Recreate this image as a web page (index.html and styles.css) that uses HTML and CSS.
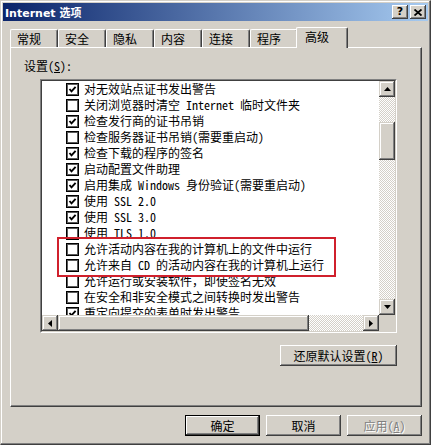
FILE: index.html
```html
<!DOCTYPE html>
<html lang="zh-CN">
<head>
    <meta charset="UTF-8">
    <meta name="viewport" content="width=device-width, initial-scale=1.0">
    <title>Internet 选项</title>
    <link rel="stylesheet" href="styles.css">
</head>
<body>
    <div class="window">
        <div class="titlebar">
            <span class="title">Internet 选项</span>
            <div class="caption-buttons">
                <button class="caption-btn">?</button>
                <button class="caption-btn">
                    <svg width="8" height="7" viewBox="0 0 8 7"><path d="M0.5 0.5 L7.5 6.5 M7.5 0.5 L0.5 6.5" stroke="#000" stroke-width="1.8" fill="none"/></svg>
                </button>
            </div>
        </div>

        <div class="tabs">
            <div class="tab">常规</div>
            <div class="tab">安全</div>
            <div class="tab">隐私</div>
            <div class="tab">内容</div>
            <div class="tab">连接</div>
            <div class="tab">程序</div>
            <div class="tab active">高级</div>
        </div>

        <div class="panel">
            <div class="label">设置(<u>S</u>):</div>
            <div class="listbox">
                <div class="listbox-inner">
                    <div class="list-view">
                        <div class="item"><span class="check on"><svg width="9" height="9" viewBox="0 0 9 9"><path d="M1.5 4 L3.5 6.3 L7.6 1.8" stroke="#000" stroke-width="1.9" fill="none"/></svg></span>对无效站点证书发出警告</div>
                        <div class="item"><span class="check"></span>关闭浏览器时清空 Internet 临时文件夹</div>
                        <div class="item"><span class="check on"><svg width="9" height="9" viewBox="0 0 9 9"><path d="M1.5 4 L3.5 6.3 L7.6 1.8" stroke="#000" stroke-width="1.9" fill="none"/></svg></span>检查发行商的证书吊销</div>
                        <div class="item"><span class="check"></span>检查服务器证书吊销(需要重启动)</div>
                        <div class="item"><span class="check on"><svg width="9" height="9" viewBox="0 0 9 9"><path d="M1.5 4 L3.5 6.3 L7.6 1.8" stroke="#000" stroke-width="1.9" fill="none"/></svg></span>检查下载的程序的签名</div>
                        <div class="item"><span class="check on"><svg width="9" height="9" viewBox="0 0 9 9"><path d="M1.5 4 L3.5 6.3 L7.6 1.8" stroke="#000" stroke-width="1.9" fill="none"/></svg></span>启动配置文件助理</div>
                        <div class="item"><span class="check on"><svg width="9" height="9" viewBox="0 0 9 9"><path d="M1.5 4 L3.5 6.3 L7.6 1.8" stroke="#000" stroke-width="1.9" fill="none"/></svg></span>启用集成 Windows 身份验证(需要重启动)</div>
                        <div class="item"><span class="check on"><svg width="9" height="9" viewBox="0 0 9 9"><path d="M1.5 4 L3.5 6.3 L7.6 1.8" stroke="#000" stroke-width="1.9" fill="none"/></svg></span>使用 SSL 2.0</div>
                        <div class="item"><span class="check on"><svg width="9" height="9" viewBox="0 0 9 9"><path d="M1.5 4 L3.5 6.3 L7.6 1.8" stroke="#000" stroke-width="1.9" fill="none"/></svg></span>使用 SSL 3.0</div>
                        <div class="item"><span class="check"></span>使用 TLS 1.0</div>
                        <div class="item"><span class="check"></span>允许活动内容在我的计算机上的文件中运行</div>
                        <div class="item"><span class="check"></span>允许来自 CD 的活动内容在我的计算机上运行</div>
                        <div class="item"><span class="check"></span>允许运行或安装软件，即使签名无效</div>
                        <div class="item"><span class="check"></span>在安全和非安全模式之间转换时发出警告</div>
                        <div class="item"><span class="check on"><svg width="9" height="9" viewBox="0 0 9 9"><path d="M1.5 4 L3.5 6.3 L7.6 1.8" stroke="#000" stroke-width="1.9" fill="none"/></svg></span>重定向提交的表单时发出警告</div>
                        <!-- red annotation around the two CD / local content rows -->
                        <div class="highlight"></div>
                    </div>

                    <div class="vscroll">
                        <div class="sb-btn"><svg width="7" height="4" viewBox="0 0 7 4"><path d="M3.5 0 L7 4 L0 4 Z" fill="#000"/></svg></div>
                        <div class="sb-track sb-top"></div>
                        <div class="sb-thumb sb-thumb-v"></div>
                        <div class="sb-track sb-fill"></div>
                        <div class="sb-btn"><svg width="7" height="4" viewBox="0 0 7 4"><path d="M0 0 L7 0 L3.5 4 Z" fill="#000"/></svg></div>
                    </div>

                    <div class="hscroll">
                        <div class="sb-btn"><svg width="4" height="7" viewBox="0 0 4 7"><path d="M4 0 L4 7 L0 3.5 Z" fill="#000"/></svg></div>
                        <div class="sb-thumb sb-thumb-h"></div>
                        <div class="sb-track sb-fill"></div>
                        <div class="sb-btn"><svg width="4" height="7" viewBox="0 0 4 7"><path d="M0 0 L4 3.5 L0 7 Z" fill="#000"/></svg></div>
                    </div>

                    <div class="sb-corner"></div>
                </div>
            </div>
            <div class="reset-row">
                <button class="btn btn-wide">还原默认设置(<u>R</u>)</button>
            </div>
        </div>

        <div class="dialog-buttons">
            <button class="btn default">确定</button>
            <button class="btn">取消</button>
            <button class="btn" disabled>应用(<u>A</u>)</button>
        </div>
    </div>
</body>
</html>
```

FILE: styles.css
```css
:root {
    --face: #d4d0c8;
    --shadow: #808080;
    --dark: #404040;
    --light: #ffffff;
    --ui-font: "Noto Sans Mono CJK SC", "Noto Sans CJK SC", sans-serif;
}

* {
    margin: 0;
    padding: 0;
    box-sizing: border-box;
}

body {
    background-color: var(--face);
    font-family: var(--ui-font);
    font-size: 12px;
    color: #000;
}

.window {
    width: 431px;
    height: 445px;
    padding: 2px;
    background-color: var(--face);
    border: 1px solid;
    border-color: var(--face) var(--dark) var(--dark) var(--face);
    box-shadow: inset -1px -1px var(--shadow), inset 1px 1px var(--light);
}

/* title bar */
.titlebar {
    height: 18px;
    display: flex;
    align-items: center;
    justify-content: space-between;
    padding: 0 2px;
    background: linear-gradient(to right, #0a246a, #a6caf0);
}

.title {
    color: #fff;
    font-family: "DejaVu Sans", "Noto Sans CJK SC", sans-serif;
    font-weight: bold;
    font-size: 11px;
}

.caption-buttons {
    display: flex;
    gap: 2px;
}

.caption-btn {
    width: 16px;
    height: 14px;
    display: flex;
    align-items: center;
    justify-content: center;
    background-color: var(--face);
    border: none;
    font-family: "DejaVu Sans", sans-serif;
    font-weight: bold;
    font-size: 11px;
    line-height: 14px;
    color: #000;
    box-shadow: inset -1px -1px var(--dark), inset 1px 1px var(--light), inset -2px -2px var(--shadow);
}

/* tabs */
.tabs {
    height: 20px;
    margin-top: 6px;
    padding-left: 7px;
    display: flex;
    align-items: flex-end;
}

.tab {
    width: 48px;
    height: 18px;
    padding-left: 6px;
    line-height: 17px;
    border-top: 1px solid var(--light);
    border-left: 1px solid var(--light);
    border-right: 1px solid var(--dark);
    box-shadow: inset -1px 0 var(--shadow);
    border-radius: 2px 2px 0 0;
    background-color: var(--face);
}

.tab.active {
    width: 52px;
    height: 21px;
    margin: 0 -2px -1px -2px;
    padding-left: 8px;
    line-height: 18px;
    position: relative;
    z-index: 1;
}

/* tab page */
.panel {
    width: 412px;
    height: 360px;
    margin-left: 7px;
    padding: 12px 0 0 13px;
    border-top: 1px solid var(--light);
    border-left: 1px solid var(--light);
    border-right: 1px solid var(--dark);
    border-bottom: 1px solid var(--dark);
    box-shadow: inset -1px -1px var(--shadow);
}

.label {
    height: 12px;
    line-height: 12px;
}

.listbox {
    width: 357px;
    height: 254px;
    margin: 7px 0 0 16px;
    border: 1px solid;
    border-color: var(--shadow) var(--light) var(--light) var(--shadow);
}

.listbox-inner {
    height: 100%;
    display: grid;
    grid-template-columns: 1fr 16px;
    grid-template-rows: 1fr 16px;
    border: 1px solid;
    border-color: var(--dark) var(--face) var(--face) var(--dark);
}

.list-view {
    position: relative;
    overflow: hidden;
    background-color: #fff;
}

.item {
    height: 16px;
    padding-left: 24px;
    display: flex;
    align-items: center;
    gap: 5px;
    white-space: nowrap;
    line-height: 16px;
}

.check {
    width: 13px;
    height: 13px;
    flex-shrink: 0;
    display: flex;
    align-items: center;
    justify-content: center;
    background-color: #fff;
    border: 1px solid #000;
    box-shadow: inset 0 0 0 1px #5a5a5a;
}

.highlight {
    position: absolute;
    left: 15px;
    top: 156px;
    width: 279px;
    height: 40px;
    border: 2px solid #d0202c;
}

/* scroll bars */
.vscroll {
    display: flex;
    flex-direction: column;
}

.hscroll {
    display: flex;
}

.sb-btn {
    width: 16px;
    height: 16px;
    flex-shrink: 0;
    display: flex;
    align-items: center;
    justify-content: center;
    background-color: var(--face);
    box-shadow: inset -1px -1px var(--dark), inset 1px 1px var(--face), inset -2px -2px var(--shadow), inset 2px 2px var(--light);
}

.sb-thumb {
    flex-shrink: 0;
    background-color: var(--face);
    box-shadow: inset -1px -1px var(--dark), inset 1px 1px var(--face), inset -2px -2px var(--shadow), inset 2px 2px var(--light);
}

.sb-thumb-v {
    height: 38px;
}

.sb-thumb-h {
    width: 251px;
}

.sb-track {
    background: repeating-conic-gradient(var(--face) 0 25%, #fff 0 50%) 0 0 / 2px 2px;
}

.sb-top {
    height: 25px;
    flex-shrink: 0;
}

.sb-fill {
    flex: 1;
}

.sb-corner {
    background-color: var(--face);
}

/* buttons */
.btn {
    width: 75px;
    height: 21px;
    font-family: var(--ui-font);
    font-size: 12px;
    color: #000;
    background-color: var(--face);
    border: none;
    box-shadow: inset -1px -1px var(--dark), inset 1px 1px var(--light), inset -2px -2px var(--shadow);
}

.btn u {
    text-underline-offset: 1px;
}

.btn.default {
    border: 1px solid #000;
}

.btn:disabled {
    color: var(--shadow);
    text-shadow: 1px 1px 0 #fff;
}

.btn-wide {
    width: 117px;
}

.reset-row {
    width: 357px;
    margin: 12px 0 0 16px;
    display: flex;
    justify-content: flex-end;
}

.dialog-buttons {
    margin-top: 8px;
    padding-right: 6px;
    display: flex;
    justify-content: flex-end;
    gap: 6px;
}
```
